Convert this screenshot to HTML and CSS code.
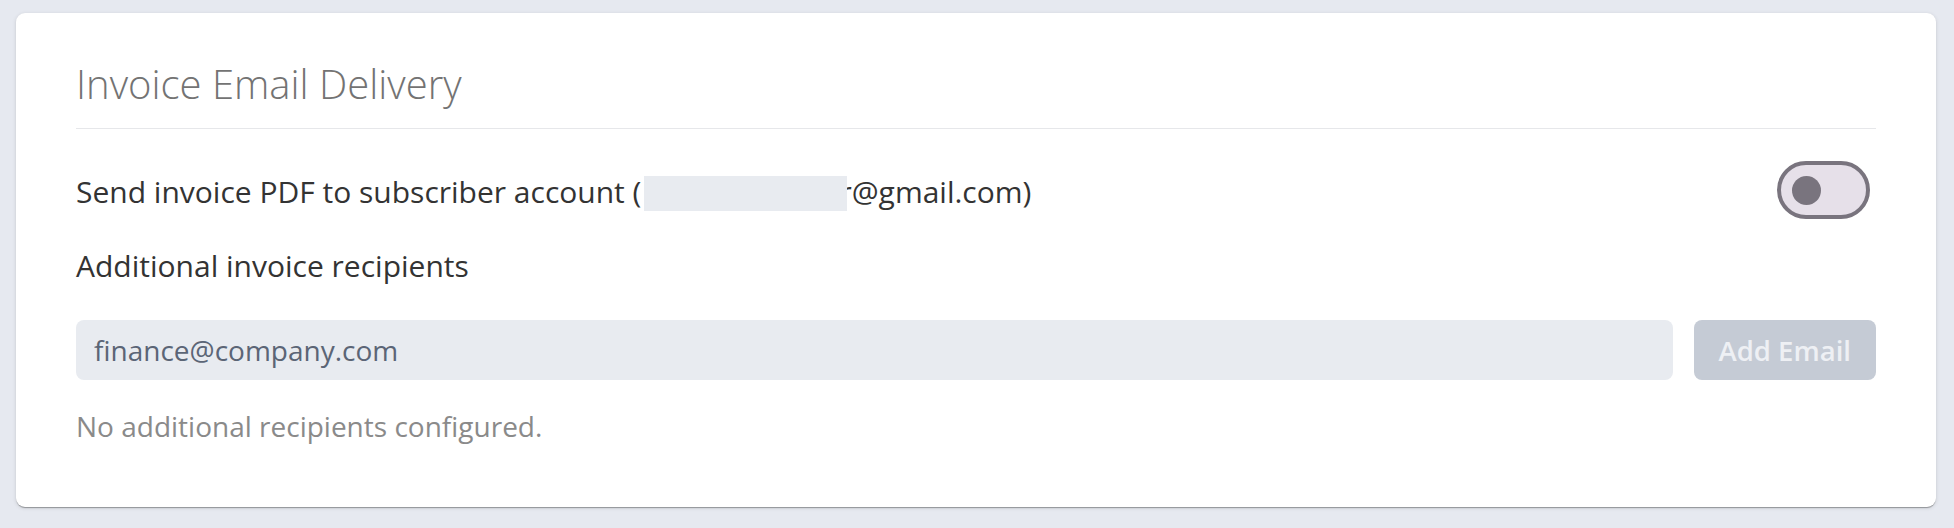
FILE: index.html
```html
<!DOCTYPE html>
<html lang="en">
<head>
<meta charset="utf-8">
<title>Invoice Email Delivery</title>
<link rel="stylesheet" href="styles.css">
</head>
<body>
<main class="page">
  <section class="card">
    <header class="card-header">
      <h2 class="card-title">Invoice Email Delivery</h2>
    </header>
    <div class="setting-row">
      <span class="setting-label">Send invoice PDF to subscriber account (<span class="redact"></span>r@gmail.com)</span>
      <span class="switch" role="switch" aria-checked="false"><span class="switch-knob"></span></span>
    </div>
    <div class="section-label">Additional invoice recipients</div>
    <div class="add-row">
      <input class="email-input" type="text" value="finance@company.com">
      <button class="add-btn" type="button" disabled>Add Email</button>
    </div>
    <p class="empty-note">No additional recipients configured.</p>
  </section>
</main>
</body>
</html>
```

FILE: styles.css
```css
* { box-sizing: border-box; }

html, body {
  margin: 0;
  background: #e6e9f0;
}

body {
  font-family: "Open Sans", "Noto Sans", sans-serif;
  color: #333333;
}

.page {
  padding: 13px 18px 22px 16px;
}

.card {
  width: 1920px;
  background: #ffffff;
  border-radius: 9px;
  padding: 47px 60px 60px;
  box-shadow: 0 2px 1px -1px rgba(0, 0, 0, 0.2), 0 1px 1px 0 rgba(0, 0, 0, 0.14), 0 1px 4px 0 rgba(0, 0, 0, 0.12);
}

.card-header {
  padding-bottom: 20px;
  border-bottom: 1px solid #e6e7ea;
}

.card-title {
  margin: 0;
  font-size: 40px;
  font-weight: 300;
  line-height: 48px;
  color: #737373;
}

.setting-row {
  margin-top: 32px;
  display: flex;
  align-items: center;
  justify-content: space-between;
  height: 58px;
}

.setting-label {
  font-size: 30px;
  line-height: 45px;
  padding-top: 3px;
  color: #333333;
}

.redact {
  display: inline-block;
  position: relative;
  width: 203px;
  height: 35px;
  vertical-align: -8px;
  margin-left: 3px;
  margin-right: -8px;
  background: #e8ebf0;
}

.switch {
  display: flex;
  align-items: center;
  width: 93px;
  height: 58px;
  margin-right: 6px;
  border: 4px solid #79747e;
  border-radius: 29px;
  background: #e6e0e9;
  padding-left: 11px;
}

.switch-knob {
  width: 29px;
  height: 29px;
  border-radius: 50%;
  background: #79747e;
}

.section-label {
  margin-top: 24px;
  font-size: 30px;
  line-height: 45px;
  color: #333333;
}

.add-row {
  margin-top: 32px;
  display: flex;
  gap: 21px;
}

.email-input {
  flex: 1;
  height: 60px;
  border: none;
  outline: none;
  border-radius: 8px;
  background: #e8ebf0;
  padding: 0 18px;
  font-family: "Open Sans", "Noto Sans", sans-serif;
  font-size: 28px;
  color: #5b6576;
}

.add-btn {
  height: 60px;
  border: none;
  border-radius: 8px;
  background: #c5cbd5;
  padding: 0 25px;
  font-family: "Open Sans", "Noto Sans", sans-serif;
  font-size: 27.5px;
  font-weight: 600;
  color: #eef0f4;
}

.empty-note {
  margin: 26px 0 0;
  font-size: 28px;
  line-height: 41px;
  color: #8a8a8a;
}
```
